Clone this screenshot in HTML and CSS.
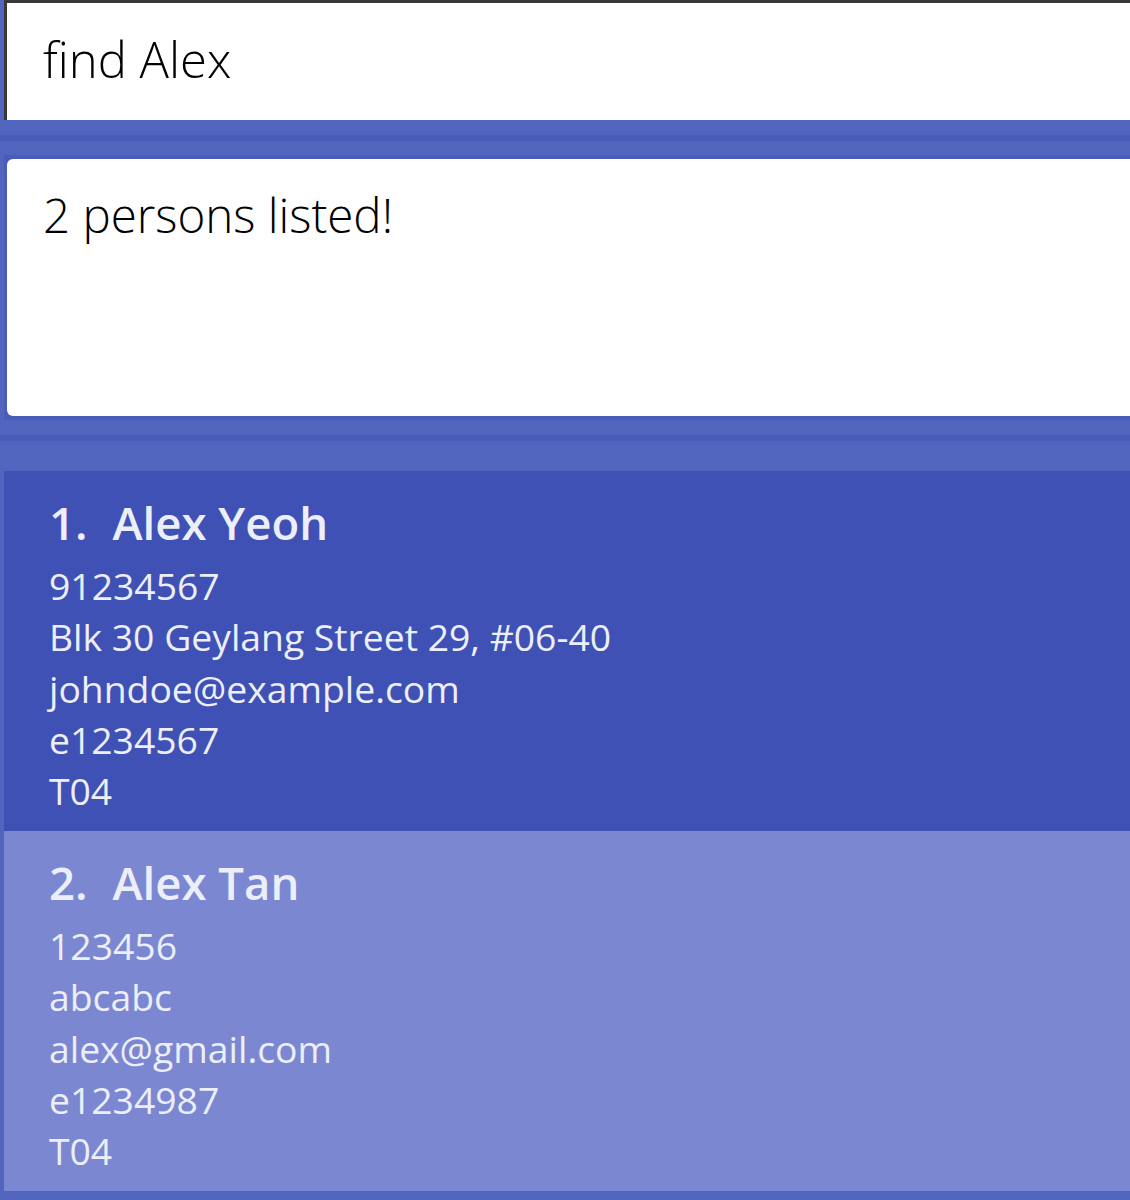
FILE: index.html
```html
<!DOCTYPE html>
<html>
<head>
<meta charset="utf-8">
<link rel="stylesheet" href="styles.css">
</head>
<body>
<div class="app">
  <div class="command-box">
    <div class="command-text">find Alex</div>
  </div>
  <div class="gap-a"></div>
  <div class="stripe"></div>
  <div class="gap-b"></div>
  <div class="result-frame">
    <div class="result-box">2 persons listed!</div>
  </div>
  <div class="gap-a"></div>
  <div class="stripe"></div>
  <div class="gap-c"></div>
  <div class="list">
    <div class="card card-selected">
      <div class="name"><span class="idx">1.</span>Alex Yeoh</div>
      <div class="line">91234567</div>
      <div class="line">Blk 30 Geylang Street 29, #06-40</div>
      <div class="line">johndoe@example.com</div>
      <div class="line">e1234567</div>
      <div class="line">T04</div>
    </div>
    <div class="card card-alt">
      <div class="name"><span class="idx">2.</span>Alex Tan</div>
      <div class="line">123456</div>
      <div class="line">abcabc</div>
      <div class="line">alex@gmail.com</div>
      <div class="line">e1234987</div>
      <div class="line">T04</div>
    </div>
  </div>
</div>
</body>
</html>
```

FILE: styles.css
```css
html, body {
  margin: 0;
  padding: 0;
  background: #5265be;
  overflow: hidden;
}
.app {
  width: 1130px;
  height: 1200px;
  font-family: "Open Sans", "Noto Sans", sans-serif;
}
.command-box {
  margin-left: 4px;
  height: 117px;
  border-top: 3px solid #383838;
  border-left: 3px solid #383838;
  background: #ffffff;
  box-sizing: content-box;
}
.command-text {
  padding: 26px 0 0 36px;
  font-size: 49px;
  font-weight: 300;
  line-height: 60px;
  color: #000;
}
.gap-a { height: 15px; }
.stripe { height: 6px; background: #4a5cb9; }
.gap-b { height: 14px; }
.gap-c { height: 30px; }
.result-frame {
  margin-left: 4px;
  padding: 4px 0 4px 3px;
  background: #4a5cb9;
}
.result-box {
  height: 257px;
  background: #ffffff;
  border-radius: 6px 0 0 6px;
  padding: 26px 0 0 36px;
  box-sizing: border-box;
  font-size: 47.5px;
  font-weight: 300;
  line-height: 60px;
  color: #000;
}
.list {
  margin-left: 4px;
}
.card {
  height: 360px;
  box-sizing: border-box;
  padding: 22px 0 0 45px;
  color: #eceef9;
}
.card-selected { background: #3f51b5; }
.card-alt { background: #7b88d1; }
.name {
  font-size: 45.5px;
  font-weight: 600;
  line-height: 58px;
  margin-bottom: 9px;
}
.idx {
  display: inline-block;
  margin-right: 25px;
}
.line {
  font-size: 37.3px;
  line-height: 51.25px;
  font-weight: 400;
}
```
